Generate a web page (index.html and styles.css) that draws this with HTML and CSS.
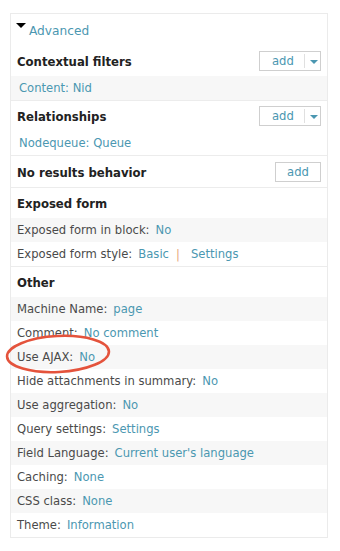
FILE: index.html
```html
<!DOCTYPE html>
<html>
<head>
<meta charset="utf-8">
<link rel="stylesheet" href="styles.css">
</head>
<body>
<div class="panel">
  <div class="adv"><span class="tri"></span><a class="adv-link">Advanced</a></div>

  <div class="section first">
    <div class="head"><span class="title">Contextual filters</span>
      <span class="btn split"><span class="btn-label">add</span><span class="sep"></span><span class="caret"></span></span></div>
    <div class="row gray item"><a class="link">Content: Nid</a></div>
  </div>

  <div class="section">
    <div class="head"><span class="title">Relationships</span>
      <span class="btn split"><span class="btn-label">add</span><span class="sep"></span><span class="caret"></span></span></div>
    <div class="row item"><a class="link">Nodequeue: Queue</a></div>
  </div>

  <div class="section">
    <div class="head tall"><span class="title">No results behavior</span>
      <span class="btn single"><span class="btn-label">add</span></span></div>
  </div>

  <div class="section">
    <div class="head"><span class="title">Exposed form</span></div>
    <div class="row gray">Exposed form in block:<a class="link val">No</a></div>
    <div class="row">Exposed form style:<a class="link val">Basic</a><span class="pipe">|</span><a class="link">Settings</a></div>
  </div>

  <div class="section">
    <div class="head"><span class="title">Other</span></div>
    <div class="row gray">Machine Name:<a class="link val">page</a></div>
    <div class="row">Comment:<a class="link val">No comment</a></div>
    <div class="row gray">Use AJAX:<a class="link val">No</a></div>
    <div class="row">Hide attachments in summary:<a class="link val">No</a></div>
    <div class="row gray">Use aggregation:<a class="link val">No</a></div>
    <div class="row">Query settings:<a class="link val">Settings</a></div>
    <div class="row gray">Field Language:<a class="link val">Current user's language</a></div>
    <div class="row">Caching:<a class="link val">None</a></div>
    <div class="row gray">CSS class:<a class="link val">None</a></div>
    <div class="row">Theme:<a class="link val">Information</a></div>
  </div>

  <svg class="circle" width="120" height="50" viewBox="0 0 120 50">
    <ellipse cx="58" cy="24" rx="51" ry="18" transform="rotate(-3 58 24)" fill="none" stroke="#e4533c" stroke-width="2.6"/>
  </svg>
</div>
</body>
</html>
```

FILE: styles.css
```css
html, body {
  margin: 0;
  padding: 0;
  background: #ffffff;
}
body {
  font-family: "DejaVu Sans", Verdana, sans-serif;
  font-size: 11.6px;
  color: #4a4a4a;
}
.panel {
  position: relative;
  margin: 13px 0 0 10px;
  width: 316px;
  border: 1px solid #ebebeb;
}
.adv {
  height: 32px;
  display: flex;
  align-items: center;
  padding-left: 5px;
}
.tri {
  width: 0;
  height: 0;
  border-left: 5px solid transparent;
  border-right: 5px solid transparent;
  border-top: 5px solid #000000;
  margin-right: 3px;
  position: relative;
  top: -5px;
}
.adv-link {
  color: #4b97b1;
  font-size: 12.2px;
  padding-top: 2px;
}
.section {
  border-top: 1px solid #ececec;
}
.section.first {
  border-top: none;
}
.head {
  height: 30px;
  display: flex;
  align-items: center;
  justify-content: space-between;
  padding: 0 6px 0 6px;
}
.head.tall {
  height: 31px;
}
.title {
  font-weight: bold;
  color: #222222;
  font-size: 11.7px;
  padding-top: 2px;
}
.btn {
  height: 18px;
  border: 1px solid #cfcfcf;
  background: #ffffff;
  display: flex;
  align-items: center;
  box-sizing: content-box;
}
.btn.split {
  width: 60px;
}
.btn.single {
  width: 44px;
  justify-content: center;
}
.btn-label {
  color: #4b97b1;
  font-size: 11.6px;
}
.split .btn-label {
  margin-left: 12px;
}
.sep {
  width: 1px;
  height: 14px;
  background: #e0e0e0;
  margin-left: 10px;
}
.caret {
  width: 0;
  height: 0;
  border-left: 4px solid transparent;
  border-right: 4px solid transparent;
  border-top: 4px solid #4b97b1;
  margin-left: 5px;
  margin-top: 2px;
}
.row {
  height: 24px;
  display: flex;
  align-items: center;
  padding-left: 6px;
}
.row.item {
  padding-left: 8px;
}
.row.gray {
  background: #f7f7f7;
}
.link {
  color: #4b97b1;
}
.val {
  margin-left: 6px;
}
.pipe {
  color: #e8a67a;
  margin: 0 11px 0 7px;
}
.circle {
  position: absolute;
  left: -11px;
  top: 316px;
}
```
